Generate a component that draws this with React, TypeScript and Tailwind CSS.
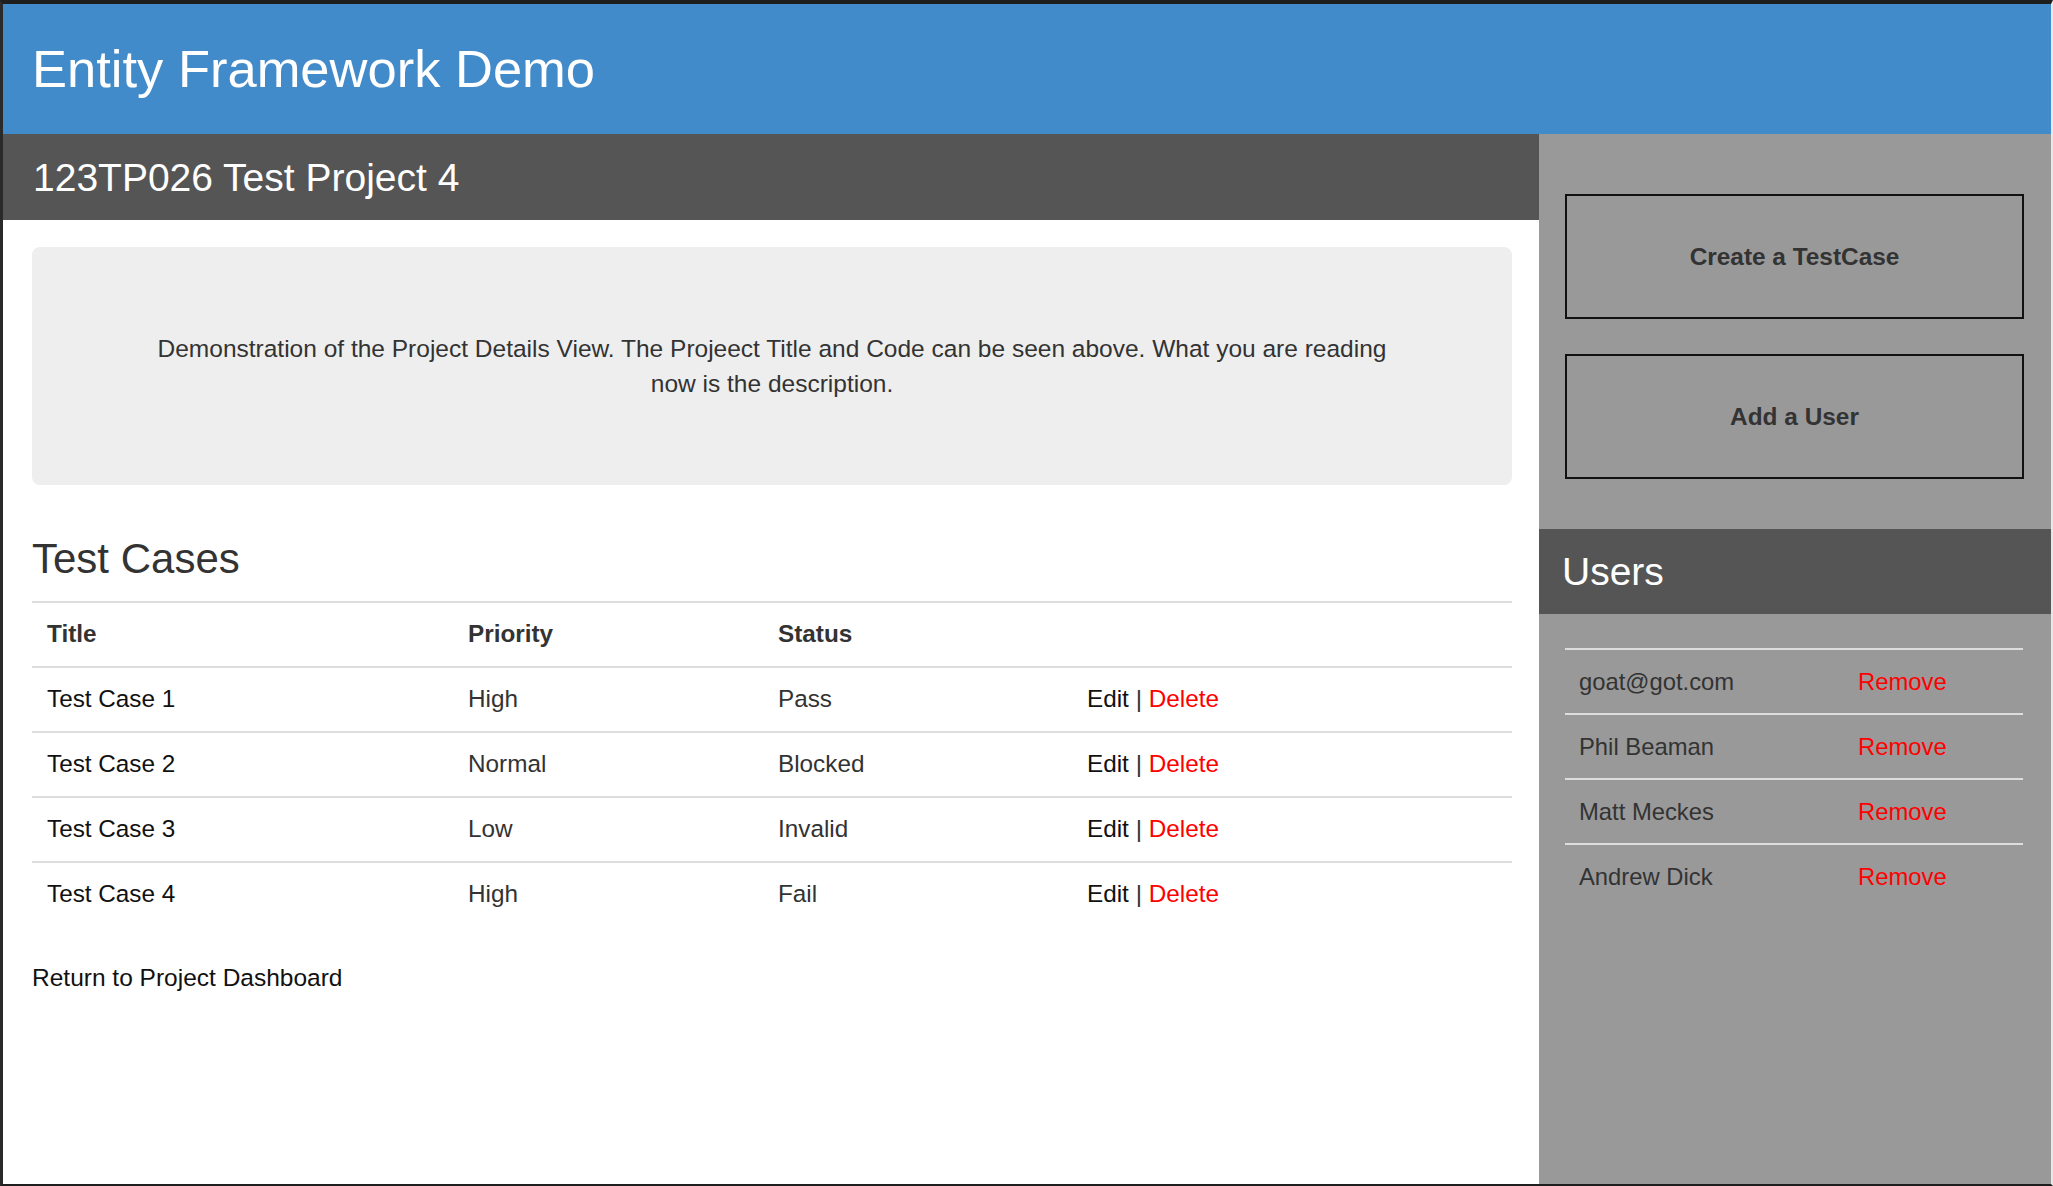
const testCases = [
  { title: "Test Case 1", priority: "High", status: "Pass" },
  { title: "Test Case 2", priority: "Normal", status: "Blocked" },
  { title: "Test Case 3", priority: "Low", status: "Invalid" },
  { title: "Test Case 4", priority: "High", status: "Fail" },
];

const users = ["goat@got.com", "Phil Beaman", "Matt Meckes", "Andrew Dick"];

const App = () => {
  return (
    <div
      className="flex h-screen flex-col overflow-hidden border-t-4 border-r-2 border-b-2 border-l-[3px] border-t-[#1e1e1e] border-r-[#e8e8e8] border-b-[#1e1e1e] border-l-[#2a2a2a] bg-white text-[#333]"
      style={{ fontFamily: '"Liberation Sans", Arial, sans-serif' }}
    >
      {/* header */}
      <div className="flex h-[130px] shrink-0 items-center bg-[#428bca] pl-[29px]">
        <h1 className="text-[52.5px] leading-none text-white">
          Entity Framework Demo
        </h1>
      </div>

      <div className="flex flex-1">
        {/* main column */}
        <div className="w-[1536px] shrink-0 bg-white">
          <div className="flex h-[86px] items-center bg-[#555555] pl-[30px]">
            <h2 className="text-[39px] leading-none text-white">
              123TP026 Test Project 4
            </h2>
          </div>

          <div className="pr-[27px] pl-[29px]">
            <div className="mt-[27px] flex h-[238px] items-center rounded-lg bg-[#eeeeee]">
              <p className="mx-auto max-w-[1245px] text-center text-[24.5px] leading-[35px] text-[#333]">
                Demonstration of the Project Details View. The Projeect Title
                and Code can be seen above. What you are reading now is the
                description.
              </p>
            </div>

            <h3 className="mt-[52px] text-[42px] leading-[43px] text-[#333]">
              Test Cases
            </h3>

            <div className="mt-[21px] text-[24.3px]">
              <div className="grid h-[65px] grid-cols-[421px_310px_309px_1fr] items-center border-t-2 border-[#dddddd] font-bold text-[#333]">
                <div className="pl-[15px]">Title</div>
                <div className="pl-[15px]">Priority</div>
                <div className="pl-[15px]">Status</div>
                <div></div>
              </div>
              {testCases.map((tc) => (
                <div
                  key={tc.title}
                  className="grid h-[65px] grid-cols-[421px_310px_309px_1fr] items-center border-t-2 border-[#dddddd]"
                >
                  <div className="pl-[15px] text-[#111]">{tc.title}</div>
                  <div className="pl-[15px] text-[#333]">{tc.priority}</div>
                  <div className="pl-[15px] text-[#333]">{tc.status}</div>
                  <div className="pl-[15px]">
                    <span className="text-[#111]">Edit</span>
                    <span className="text-[#333]"> | </span>
                    <span className="text-[#ff0000]">Delete</span>
                  </div>
                </div>
              ))}
            </div>

            <p className="mt-[35px] text-[24.5px] leading-[33px] text-[#111]">
              Return to Project Dashboard
            </p>
          </div>
        </div>

        {/* sidebar */}
        <div className="flex-1 bg-[#999999]">
          <div className="mt-[60px] mr-[27px] ml-[26px] flex flex-col gap-[35px]">
            <button className="flex h-[125px] items-center justify-center border-2 border-[#111] pt-[2px] text-[24.4px] font-bold text-[#333]">
              Create a TestCase
            </button>
            <button className="flex h-[125px] items-center justify-center border-2 border-[#111] pt-[2px] text-[24.4px] font-bold text-[#333]">
              Add a User
            </button>
          </div>

          <div className="mt-[50px] flex h-[85px] items-center bg-[#555555] pl-[23px]">
            <h2 className="text-[39px] leading-none text-white">Users</h2>
          </div>

          <div className="mt-[34px] mr-[28px] ml-[26px] text-[23.8px]">
            {users.map((u) => (
              <div
                key={u}
                className="grid h-[65px] grid-cols-[279px_1fr] items-center border-t-2 border-[#dddddd]"
              >
                <div className="pl-[14px] text-[#333]">{u}</div>
                <div className="pl-[14px] text-[#ff0000]">Remove</div>
              </div>
            ))}
          </div>
        </div>
      </div>
    </div>
  );
};

export default App;
